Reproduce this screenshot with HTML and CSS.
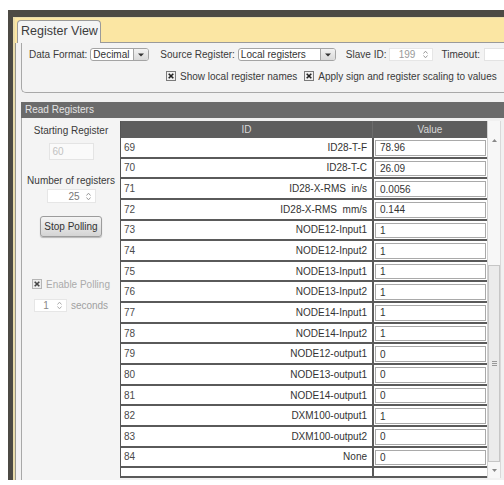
FILE: index.html
```html
<!DOCTYPE html>
<html>
<head>
<meta charset="utf-8">
<link rel="stylesheet" href="styles.css">
</head>
<body>
<div class="frame">
  <div class="window">
    <div class="tabbar">
      <div class="tab">Register View</div>
      <div class="tabfill"></div>
    </div>
    <div class="panel">
      <div class="settings">
        <div class="srow r1">
          <span class="lbl">Data Format:</span>
          <span class="select fmt"><span class="sel-text">Decimal</span><span class="sel-btn"><svg width="6" height="4" viewBox="0 0 6 4"><path d="M0 0.5 L6 0.5 L3 3.5 Z" fill="#333"/></svg></span></span>
          <span class="lbl gap11">Source Register:</span>
          <span class="select src"><span class="sel-text">Local registers</span><span class="sel-btn"><svg width="6" height="4" viewBox="0 0 6 4"><path d="M0 0.5 L6 0.5 L3 3.5 Z" fill="#333"/></svg></span></span>
          <span class="lbl gap10">Slave ID:</span>
          <span class="spin slave"><span class="spin-val">199</span><svg class="arrows" width="5" height="9" viewBox="0 0 5 9"><path d="M0.5 3.5 L2.5 1.2 L4.5 3.5 M0.5 5.5 L2.5 7.8 L4.5 5.5" fill="none" stroke="#999" stroke-width="1"/></svg></span>
          <span class="lbl gap8">Timeout:</span>
          <span class="tinput"></span>
        </div>
        <div class="srow r2">
          <svg class="cb" width="10" height="10" viewBox="0 0 10 10"><rect x="0.5" y="0.5" width="9" height="9" fill="#f0f0f0" stroke="#7a7a7a"/><path d="M2.7 2.7 L7.3 7.3 M7.3 2.7 L2.7 7.3" stroke="#222" stroke-width="1.6"/></svg>
          <span class="cb-lbl">Show local register names</span>
          <svg class="cb cb2" width="10" height="10" viewBox="0 0 10 10"><rect x="0.5" y="0.5" width="9" height="9" fill="#f0f0f0" stroke="#7a7a7a"/><path d="M2.7 2.7 L7.3 7.3 M7.3 2.7 L2.7 7.3" stroke="#222" stroke-width="1.6"/></svg>
          <span class="cb-lbl">Apply sign and register scaling to values</span>
        </div>
      </div>
      <div class="sectbar">Read Registers</div>
      <div class="body">
        <div class="side">
          <div class="side-label">Starting Register</div>
          <div class="num-input">60</div>
          <div class="side-label lbl2">Number of registers</div>
          <div class="spin count"><span class="spin-val">25</span><svg class="arrows" width="5" height="9" viewBox="0 0 5 9"><path d="M0.5 3.5 L2.5 1.2 L4.5 3.5 M0.5 5.5 L2.5 7.8 L4.5 5.5" fill="none" stroke="#999" stroke-width="1"/></svg></div>
          <div class="btn">Stop Polling</div>
          <div class="check-row">
            <svg width="10" height="10" viewBox="0 0 10 10"><rect x="0.5" y="0.5" width="9" height="9" fill="#ececec" stroke="#b5b5b5"/><path d="M2.7 2.7 L7.3 7.3 M7.3 2.7 L2.7 7.3" stroke="#444" stroke-width="1.6"/></svg>
            <span>Enable Polling</span>
          </div>
          <div class="sec-row">
            <div class="spin secs"><span class="spin-val">1</span><svg class="arrows" width="5" height="9" viewBox="0 0 5 9"><path d="M0.5 3.5 L2.5 1.2 L4.5 3.5 M0.5 5.5 L2.5 7.8 L4.5 5.5" fill="none" stroke="#aaa" stroke-width="1"/></svg></div>
            <span>seconds</span>
          </div>
        </div>
        <div class="tablearea">
          <div class="table">
            <div class="thead"><div class="th">ID</div><div class="th thv">Value</div></div>
            <div class="row"><div class="idc"><span>69</span><span>ID28-T-F</span></div><div class="vc"><div class="vbox">78.96</div></div></div>
            <div class="row"><div class="idc"><span>70</span><span>ID28-T-C</span></div><div class="vc"><div class="vbox">26.09</div></div></div>
            <div class="row"><div class="idc"><span>71</span><span>ID28-X-RMS&nbsp; in/s</span></div><div class="vc"><div class="vbox">0.0056</div></div></div>
            <div class="row"><div class="idc"><span>72</span><span>ID28-X-RMS&nbsp; mm/s</span></div><div class="vc"><div class="vbox">0.144</div></div></div>
            <div class="row"><div class="idc"><span>73</span><span>NODE12-Input1</span></div><div class="vc"><div class="vbox">1</div></div></div>
            <div class="row"><div class="idc"><span>74</span><span>NODE12-Input2</span></div><div class="vc"><div class="vbox">1</div></div></div>
            <div class="row"><div class="idc"><span>75</span><span>NODE13-Input1</span></div><div class="vc"><div class="vbox">1</div></div></div>
            <div class="row"><div class="idc"><span>76</span><span>NODE13-Input2</span></div><div class="vc"><div class="vbox">1</div></div></div>
            <div class="row"><div class="idc"><span>77</span><span>NODE14-Input1</span></div><div class="vc"><div class="vbox">1</div></div></div>
            <div class="row"><div class="idc"><span>78</span><span>NODE14-Input2</span></div><div class="vc"><div class="vbox">1</div></div></div>
            <div class="row"><div class="idc"><span>79</span><span>NODE12-output1</span></div><div class="vc"><div class="vbox">0</div></div></div>
            <div class="row"><div class="idc"><span>80</span><span>NODE13-output1</span></div><div class="vc"><div class="vbox">0</div></div></div>
            <div class="row"><div class="idc"><span>81</span><span>NODE14-output1</span></div><div class="vc"><div class="vbox">0</div></div></div>
            <div class="row"><div class="idc"><span>82</span><span>DXM100-output1</span></div><div class="vc"><div class="vbox">1</div></div></div>
            <div class="row"><div class="idc"><span>83</span><span>DXM100-output2</span></div><div class="vc"><div class="vbox">0</div></div></div>
            <div class="row"><div class="idc"><span>84</span><span>None</span></div><div class="vc"><div class="vbox">0</div></div></div>
            <div class="row partial"><div class="idc"></div><div class="vc"></div></div>
          </div>
          <div class="scroll">
            <div class="sb-up"><svg width="5" height="3" viewBox="0 0 5 3"><path d="M0 3 L2.5 0 L5 3 Z" fill="#888"/></svg></div>
            <div class="sb-gap"></div>
            <div class="thumb"><svg width="5" height="5" viewBox="0 0 5 5"><path d="M0 0.5 H5 M0 2.5 H5 M0 4.5 H5" stroke="#999" stroke-width="1"/></svg></div>
            <div class="sb-down"><svg width="5" height="3" viewBox="0 0 5 3"><path d="M0 0 L5 0 L2.5 3 Z" fill="#888"/></svg></div>
          </div>
        </div>
      </div>
    </div>
  </div>
</div>
</body>
</html>
```

FILE: styles.css
```css
* { box-sizing: border-box; margin: 0; padding: 0; }
html, body { width: 504px; height: 485px; overflow: hidden; background: #fff; }
body { font-family: "Liberation Sans", Arial, sans-serif; font-size: 10px; color: #3a3a3a; }

.frame { margin: 10px 0 0 8px; width: 496px; height: 470px; background: #4c4a44; padding: 7px 0 0 5px; }
.window { height: 100%; border-left: 2px solid #e9dcab; border-top: 1px solid #e9dcab; display: flex; flex-direction: column; background: #f1f1f1; }

.tabbar { height: 25px; flex-shrink: 0; background: #fbe6a3; padding: 2px 0 0 2px; display: flex; }
.tab { width: 84px; border: 1px solid #9a9a9a; border-bottom: none; border-radius: 4px 4px 0 0; background: #f4f4f4; font-size: 12.5px; color: #3c3c3c; padding-left: 3px; line-height: 21px; white-space: nowrap; }
.tabfill { flex: 1; border-bottom: 1px solid #9a9a9a; }

.panel { flex: 1; border-left: 1px solid #96968e; display: flex; flex-direction: column; background: #f1f1f1; min-height: 0; }

.settings { margin-left: 5px; height: 50px; flex-shrink: 0; border-left: 1px solid #a8a8a8; border-bottom: 1px solid #a8a8a8; border-bottom-left-radius: 5px; padding: 5px 0 0 7px; overflow: hidden; background: #f3f3f3; }
.srow { display: flex; align-items: center; white-space: nowrap; }
.r1 { height: 13px; }
.r2 { height: 12px; margin-top: 9px; padding-left: 137px; }
.lbl { flex-shrink: 0; }
.gap11 { margin-left: 11px; }
.gap10 { margin-left: 10px; }
.gap8 { margin-left: 8px; }

.select { flex-shrink: 0; margin-left: 3px; height: 13px; display: flex; border: 1px solid #a4a4a4; border-radius: 3px; background: #fff; overflow: hidden; }
.select.fmt { width: 59px; }
.select.src { width: 98px; }
.sel-text { flex: 1; padding-left: 2px; line-height: 11px; color: #333; }
.sel-btn { width: 15px; border-left: 1px solid #a4a4a4; background: linear-gradient(#f2f2f2, #d9d9d9); display: flex; align-items: center; justify-content: center; }

.spin { flex-shrink: 0; display: flex; align-items: center; justify-content: flex-end; background: #fff; border: 1px solid #e6e6e6; }
.spin-val { color: #999; }
.spin.slave { margin-left: 3px; width: 44px; height: 13px; padding-right: 4px; gap: 8px; }
.tinput { flex-shrink: 0; margin-left: 4px; width: 40px; height: 13px; background: #fff; border: 1px solid #e3e3e3; }

.cb { flex-shrink: 0; }
.cb-lbl { margin-left: 4px; }
.cb2 { margin-left: 7px; }

.sectbar { margin: 9px 0 0 5px; height: 16px; flex-shrink: 0; background: #6b6b6b; color: #e4e4e4; padding-left: 4px; line-height: 16px; }

.body { flex: 1; margin-left: 5px; display: flex; border-left: 1px solid #a8a8a8; min-height: 0; }

.side { width: 98px; flex-shrink: 0; background: #f4f4f4; display: flex; flex-direction: column; align-items: center; padding-top: 7px; color: #3a3a3a; }
.side-label { line-height: 12px; white-space: nowrap; }
.lbl2 { margin-top: 15px; }
.num-input { margin-top: 6px; width: 45px; height: 17px; background: #fafafa; border: 1px solid #e4e4e4; color: #c2c2c2; padding-left: 3px; line-height: 15px; }
.spin.count { margin-top: 2px; width: 49px; height: 14px; padding-right: 4px; gap: 6px; }
.spin.count .spin-val { color: #777; }
.btn { margin-top: 13px; width: 62px; height: 21px; border: 1px solid #9c9c9c; border-radius: 3px; background: linear-gradient(#f5f5f5, #d4d4d4); box-shadow: 0 1px 1px rgba(0,0,0,0.25); text-align: center; line-height: 19px; color: #333; }
.check-row { margin-top: 41px; display: flex; align-items: center; gap: 4px; color: #ababab; height: 12px; white-space: nowrap; }
.sec-row { margin-top: 9px; display: flex; align-items: center; gap: 4px; color: #a0a0a0; white-space: nowrap; }
.spin.secs { width: 33px; height: 13px; padding-right: 4px; gap: 8px; }
.spin.secs .spin-val { color: #888; }

.tablearea { flex: 1; display: flex; align-items: flex-start; padding-top: 3px; }
.table { width: 367px; height: 357px; flex-shrink: 0; border-left: 1px solid #555; background: #fff; overflow: hidden; }
.thead { height: 17px; display: grid; grid-template-columns: 251px 115px; background: #5e5e5e; color: #d8d8d8; }
.th { text-align: center; line-height: 17px; }
.thv { border-left: 1px solid #6c6c6c; }
.row { height: 20.65px; display: grid; grid-template-columns: 251px 115px; border-bottom: 2px solid #5a5a5a; background: #fff; }
.row.partial { height: 9.6px; }
.idc { display: flex; justify-content: space-between; align-items: center; padding: 0 5px 0 3px; color: #333; white-space: nowrap; }
.idc span:first-child { color: #4a4a4a; }
.vc { border-left: 2px solid #5a5a5a; padding: 2px 1px 1px 1px; }
.vbox { height: 100%; border: 1px solid #a9a9a9; background: #fff; padding-left: 4px; display: flex; align-items: center; color: #333; }

.scroll { width: 14px; height: 357px; flex-shrink: 0; background: #f7f7f7; border-left: 1px solid #d2d2d2; border-right: 1px solid #d9d9d9; display: flex; flex-direction: column; align-items: center; }
.sb-up { height: 38px; display: flex; align-items: center; justify-content: center; flex-shrink: 0; }
.sb-gap { height: 106px; flex-shrink: 0; }
.thumb { width: 12px; height: 197px; flex-shrink: 0; background: #ebebeb; border: 1px solid #c6c6c6; display: flex; align-items: center; justify-content: center; }
.sb-down { flex: 1; display: flex; align-items: center; justify-content: center; }
```
